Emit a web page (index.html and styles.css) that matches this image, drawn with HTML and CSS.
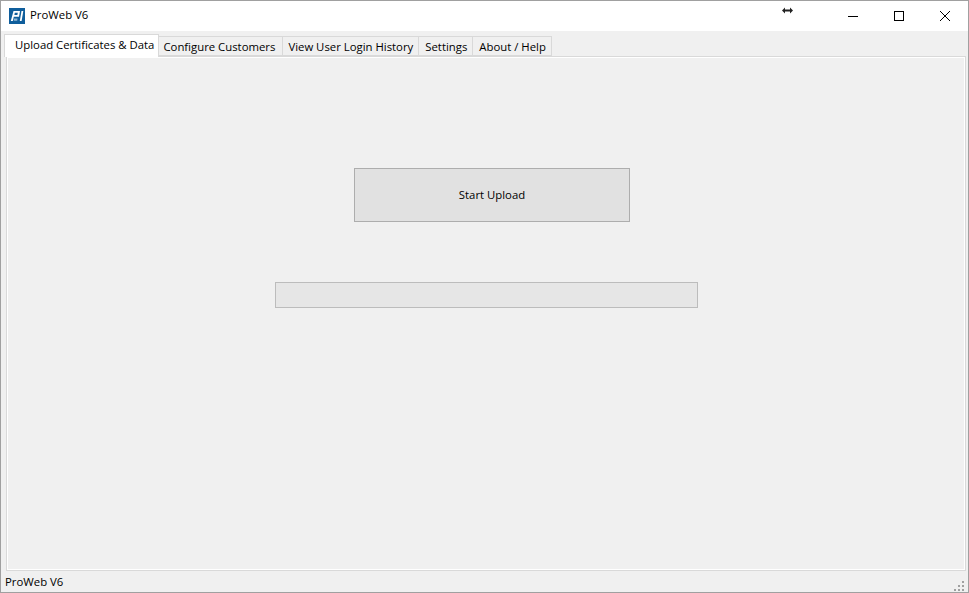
FILE: index.html
```html
<!DOCTYPE html>
<html lang="en">
<head>
<meta charset="utf-8">
<title>ProWeb V6</title>
<link rel="stylesheet" href="styles.css">
</head>
<body>
<div class="window">
  <header class="titlebar">
    <svg class="app-icon" width="16" height="16" viewBox="0 0 16 16">
      <rect width="16" height="16" fill="#0f5e9c"/>
      <path fill-rule="evenodd" d="M4.500 3H11L10 8.800H4.800L3.800 13H1.800ZM5.800 4.800L5.400 7H8.400L8.800 4.800Z" fill="#fff"/>
      <path d="M12.500 3H14.300L12.600 13H10.800Z" fill="#fff"/>
      <path d="M5 10.500H8.500L8.200 12.800H4.700Z" fill="#8fb6d4"/>
    </svg>
    <span class="title">ProWeb V6</span>
    <svg class="resize-cursor" width="11" height="7" viewBox="0 0 11 7">
      <path d="M0 3.500L3 .5V2.500H8V.5L11 3.500L8 6.500V4.500H3V6.500Z" fill="#222"/>
    </svg>
    <div class="controls">
      <button class="control"><svg width="10" height="10" viewBox="0 0 10 10"><path d="M0 5.500H10" stroke="#000" fill="none"/></svg></button>
      <button class="control"><svg width="10" height="10" viewBox="0 0 10 10"><rect x=".5" y=".5" width="9" height="9" stroke="#000" fill="none"/></svg></button>
      <button class="control"><svg width="10" height="10" viewBox="0 0 10 10"><path d="M0 0L10 10M10 0L0 10" stroke="#000" stroke-width="1" fill="none"/></svg></button>
    </div>
  </header>
  <nav class="tabs">
    <div class="tab active">Upload Certificates &amp; Data</div>
    <div class="tab tab-first">Configure Customers</div>
    <div class="tab tab-tight">View User Login History</div>
    <div class="tab">Settings</div>
    <div class="tab">About / Help</div>
  </nav>
  <main class="pane">
    <button class="upload">Start Upload</button>
    <div class="progress"></div>
  </main>
  <footer class="statusbar">
    <span>ProWeb V6</span>
    <svg class="grip" width="11" height="11" viewBox="0 0 11 11" fill="#a0a0a0">
      <rect x="8" y="0" width="2" height="2"/>
      <rect x="4" y="4" width="2" height="2"/><rect x="8" y="4" width="2" height="2"/>
      <rect x="0" y="8" width="2" height="2"/><rect x="4" y="8" width="2" height="2"/><rect x="8" y="8" width="2" height="2"/>
    </svg>
  </footer>
</div>
</body>
</html>
```
FILE: styles.css
```css
* { box-sizing: border-box; }
html, body { margin: 0; height: 100%; overflow: hidden; }
body { font-family: "Open Sans", "Noto Sans", sans-serif; font-size: 11.35px; color: #000; }
.window {
  width: 969px; height: 593px;
  border: 1px solid #a0a0a0;
  background: #f0f0f0;
  display: flex; flex-direction: column;
}
.titlebar {
  height: 30px; flex: none; background: #fff;
  display: flex; align-items: center;
  padding: 0 0 1px 8px;
}
.app-icon { flex: none; }
.title { margin: -2px 0 0 5px; }
.resize-cursor { margin-left: 694px; margin-top: -11px; flex: none; }
.controls { margin-left: auto; display: flex; height: 100%; }
.control {
  width: 46px; height: 100%; padding: 0; border: 0; background: none;
  display: flex; align-items: center; justify-content: center;
}
.tabs {
  height: 25px; flex: none; padding: 3px 0 0 3px;
  display: flex; align-items: flex-end;
  position: relative; z-index: 1;
}
.tab {
  height: 20px; padding: 1px 5px 0 6px; line-height: 18px;
  border: 1px solid #d9d9d9; border-left-width: 0;
  white-space: nowrap;
}
.tab-first { padding-left: 4px; padding-right: 7px; }
.tab-tight { padding-left: 5px; padding-right: 5px; }
.tab.active {
  height: 23px; margin-bottom: -1px; padding: 0 4px 0 10px; line-height: 20px;
  background: #fff; border-left-width: 1px; border-bottom: 0;
}
.pane {
  flex: 1; margin: 0 2px 0 5px;
  border: 1px solid #d9d9d9; outline: 1px solid #fff; outline-offset: -2px;
  padding: 111px 0 0 0;
  display: flex; flex-direction: column;
}
.upload {
  width: 276px; height: 54px; margin-left: 347px; flex: none;
  background: #e1e1e1; border: 1px solid #adadad; border-radius: 0;
  font: inherit; color: #000; padding: 0 0 2px;
}
.progress {
  width: 423px; height: 26px; margin: 60px 0 0 268px; flex: none;
  background: #e6e6e6; border: 1px solid #bcbcbc;
}
.statusbar {
  height: 21px; flex: none; padding: 0 3px 0 4px;
  display: flex; align-items: center; justify-content: space-between;
}
.grip { align-self: flex-end; }
```
